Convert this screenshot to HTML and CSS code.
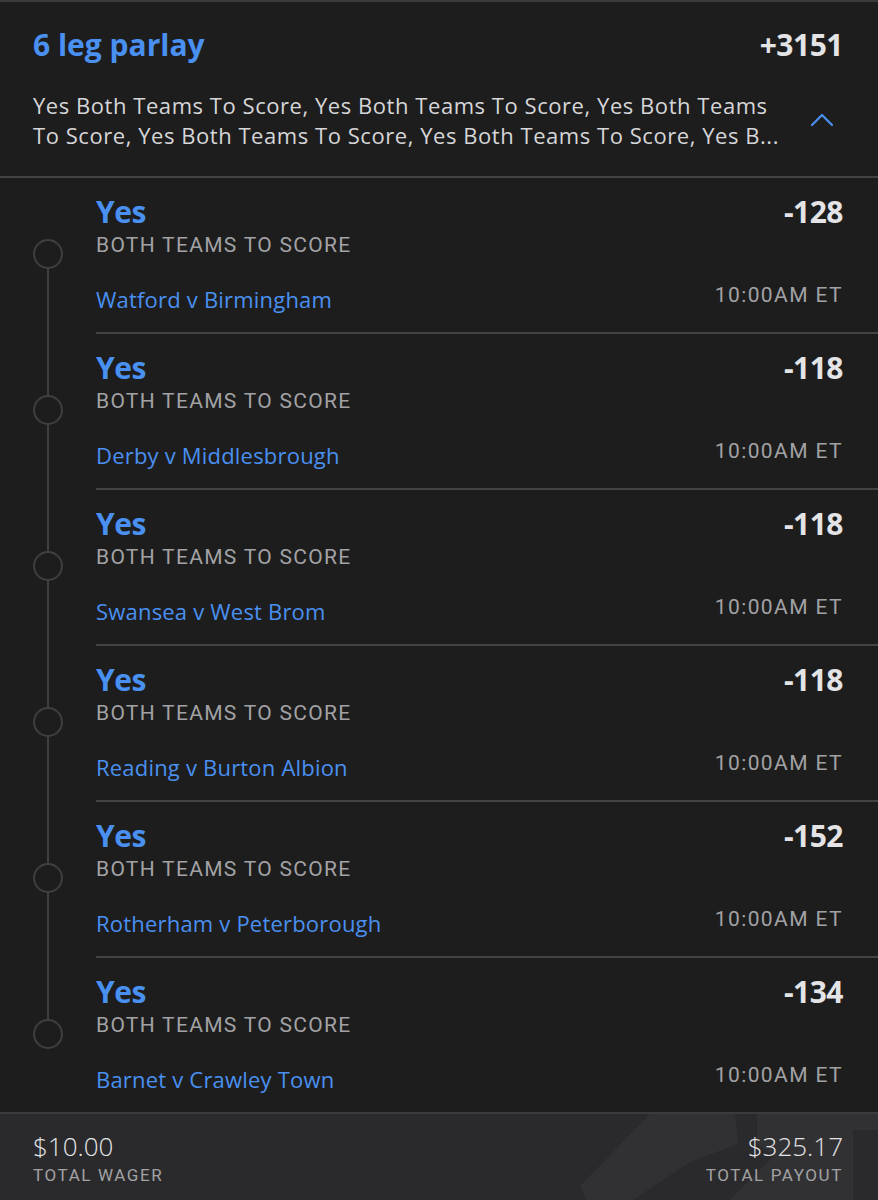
FILE: index.html
```html
<!DOCTYPE html>
<html lang="en">
<head>
<meta charset="utf-8">
<title>6 leg parlay</title>
<link rel="stylesheet" href="styles.css">
</head>
<body>
<div class="card">
  <header class="header">
    <div class="title-row">
      <h1 class="title">6 leg parlay</h1>
      <div class="total-odds">+3151</div>
    </div>
    <div class="summary-row">
      <p class="summary">Yes Both Teams To Score, Yes Both Teams To Score, Yes Both Teams To Score, Yes Both Teams To Score, Yes Both Teams To Score, Yes B...</p>
      <svg class="chevron" width="24" height="14" viewBox="0 0 24 14" aria-hidden="true"><path d="M2 12 L12 2 L22 12" fill="none" stroke="#4a90f0" stroke-width="2.2" stroke-linecap="round" stroke-linejoin="round"/></svg>
    </div>
  </header>

  <section class="legs">
    <div class="leg first">
      <div class="rail"><span class="seg seg-top"></span><span class="dot"></span><span class="seg seg-bottom"></span></div>
      <div class="leg-body">
        <div class="row"><span class="pick">Yes</span><span class="odds">-128</span></div>
        <div class="market">BOTH TEAMS TO SCORE</div>
        <div class="row row-event"><span class="event">Watford v Birmingham</span><span class="time">10:00AM ET</span></div>
      </div>
    </div>
    <div class="leg">
      <div class="rail"><span class="seg seg-top"></span><span class="dot"></span><span class="seg seg-bottom"></span></div>
      <div class="leg-body">
        <div class="row"><span class="pick">Yes</span><span class="odds">-118</span></div>
        <div class="market">BOTH TEAMS TO SCORE</div>
        <div class="row row-event"><span class="event">Derby v Middlesbrough</span><span class="time">10:00AM ET</span></div>
      </div>
    </div>
    <div class="leg">
      <div class="rail"><span class="seg seg-top"></span><span class="dot"></span><span class="seg seg-bottom"></span></div>
      <div class="leg-body">
        <div class="row"><span class="pick">Yes</span><span class="odds">-118</span></div>
        <div class="market">BOTH TEAMS TO SCORE</div>
        <div class="row row-event"><span class="event">Swansea v West Brom</span><span class="time">10:00AM ET</span></div>
      </div>
    </div>
    <div class="leg">
      <div class="rail"><span class="seg seg-top"></span><span class="dot"></span><span class="seg seg-bottom"></span></div>
      <div class="leg-body">
        <div class="row"><span class="pick">Yes</span><span class="odds">-118</span></div>
        <div class="market">BOTH TEAMS TO SCORE</div>
        <div class="row row-event"><span class="event">Reading v Burton Albion</span><span class="time">10:00AM ET</span></div>
      </div>
    </div>
    <div class="leg">
      <div class="rail"><span class="seg seg-top"></span><span class="dot"></span><span class="seg seg-bottom"></span></div>
      <div class="leg-body">
        <div class="row"><span class="pick">Yes</span><span class="odds">-152</span></div>
        <div class="market">BOTH TEAMS TO SCORE</div>
        <div class="row row-event"><span class="event">Rotherham v Peterborough</span><span class="time">10:00AM ET</span></div>
      </div>
    </div>
    <div class="leg last">
      <div class="rail"><span class="seg seg-top"></span><span class="dot"></span><span class="seg seg-bottom"></span></div>
      <div class="leg-body">
        <div class="row"><span class="pick">Yes</span><span class="odds">-134</span></div>
        <div class="market">BOTH TEAMS TO SCORE</div>
        <div class="row row-event"><span class="event">Barnet v Crawley Town</span><span class="time">10:00AM ET</span></div>
      </div>
    </div>
  </section>

  <footer class="footer">
    <svg class="watermark" width="300" height="88" viewBox="0 0 300 88" aria-hidden="true">
      <path d="M2 72 L72 0 L157 0 L160 30 L112 48 L52 88 L10 88 Z" fill="#313134"/>
      <path d="M179 0 L300 0 L300 16 L275 16 L275 88 L150 88 L196 42 L179 30 Z" fill="#313134"/>
    </svg>
    <div class="stat">
      <div class="amount">$10.00</div>
      <div class="label">TOTAL WAGER</div>
    </div>
    <div class="stat stat-right">
      <div class="amount">$325.17</div>
      <div class="label">TOTAL PAYOUT</div>
    </div>
  </footer>
</div>
</body>
</html>
```

FILE: styles.css
```css
* { box-sizing: border-box; }

html, body {
  margin: 0;
  padding: 0;
  background: #1d1d1e;
}

body {
  font-family: "Open Sans", "Noto Sans", sans-serif;
  color: #e4e4e6;
}

.card {
  width: 878px;
  height: 1200px;
  background: #1d1d1e;
  border-top: 2px solid #3a3a3c;
  display: flex;
  flex-direction: column;
  overflow: hidden;
}

/* Header */
.header {
  padding: 25px 35px 26px 33px;
  border-bottom: 2px solid #434345;
}

.title-row {
  display: flex;
  justify-content: space-between;
  align-items: center;
  height: 36px;
}

.title {
  margin: 0;
  font-size: 30px;
  line-height: 36px;
  font-weight: 700;
  color: #4a90f0;
  letter-spacing: 0;
}

.total-odds {
  font-size: 30px;
  line-height: 36px;
  font-weight: 700;
  color: #e4e4e6;
  letter-spacing: -0.5px;
}

.summary-row {
  display: flex;
  align-items: center;
  justify-content: space-between;
  margin-top: 27px;
}

.summary {
  margin: 0;
  width: 760px;
  font-size: 22px;
  line-height: 30px;
  color: #d6d6d8;
  letter-spacing: 0.55px;
}

.chevron {
  margin-right: 9px;
  flex: none;
}

/* Legs */
.legs {
  display: flex;
  flex-direction: column;
}

.leg {
  display: flex;
  align-items: stretch;
}

.rail {
  width: 96px;
  flex: none;
  display: flex;
  flex-direction: column;
  align-items: center;
}

.seg {
  width: 2px;
  background: #3f3f41;
}

.seg-top {
  height: 61px;
  flex: none;
}

.seg-bottom {
  flex: 1;
}

.first .seg-top,
.last .seg-bottom {
  background: transparent;
}

.dot {
  width: 30px;
  height: 30px;
  flex: none;
  border: 2px solid #3f3f41;
  border-radius: 50%;
}

.leg-body {
  flex: 1;
  padding: 16px 35px 18px 0;
  border-bottom: 2px solid #434345;
}

.last .leg-body {
  border-bottom: none;
}

.row {
  display: flex;
  justify-content: space-between;
  align-items: center;
}

.pick {
  font-size: 30px;
  line-height: 36px;
  font-weight: 700;
  color: #4a90f0;
  letter-spacing: -0.5px;
}

.odds {
  font-size: 30px;
  line-height: 36px;
  font-weight: 700;
  color: #e4e4e6;
  letter-spacing: -0.5px;
}

.market {
  margin-top: 3px;
  font-family: Roboto, "Open Sans", sans-serif;
  font-size: 21px;
  line-height: 24px;
  letter-spacing: 1.3px;
  color: #a2a2a4;
}

.row-event {
  margin-top: 27px;
}

.event {
  font-size: 22px;
  line-height: 30px;
  color: #4a90f0;
  letter-spacing: 0.2px;
}

.time {
  font-family: Roboto, "Open Sans", sans-serif;
  font-size: 21px;
  line-height: 22px;
  letter-spacing: 1.4px;
  color: #a2a2a4;
  padding-bottom: 8px;
}

/* Footer */
.footer {
  position: relative;
  flex: 1;
  display: flex;
  justify-content: space-between;
  align-items: flex-start;
  padding: 17px 35px 0 33px;
  background: #2a2a2c;
  border-top: 2px solid #3b3b3d;
  overflow: hidden;
}

.watermark {
  position: absolute;
  right: 0;
  top: 0;
}

.stat {
  position: relative;
  display: flex;
  flex-direction: column;
}

.stat-right {
  align-items: flex-end;
}

.amount {
  font-size: 26px;
  line-height: 30px;
  font-weight: 300;
  color: #e4e4e6;
  letter-spacing: 0;
}

.label {
  margin-top: 3px;
  font-family: Roboto, "Open Sans", sans-serif;
  font-size: 17px;
  line-height: 22px;
  letter-spacing: 1.6px;
  color: #a2a2a4;
}
```
